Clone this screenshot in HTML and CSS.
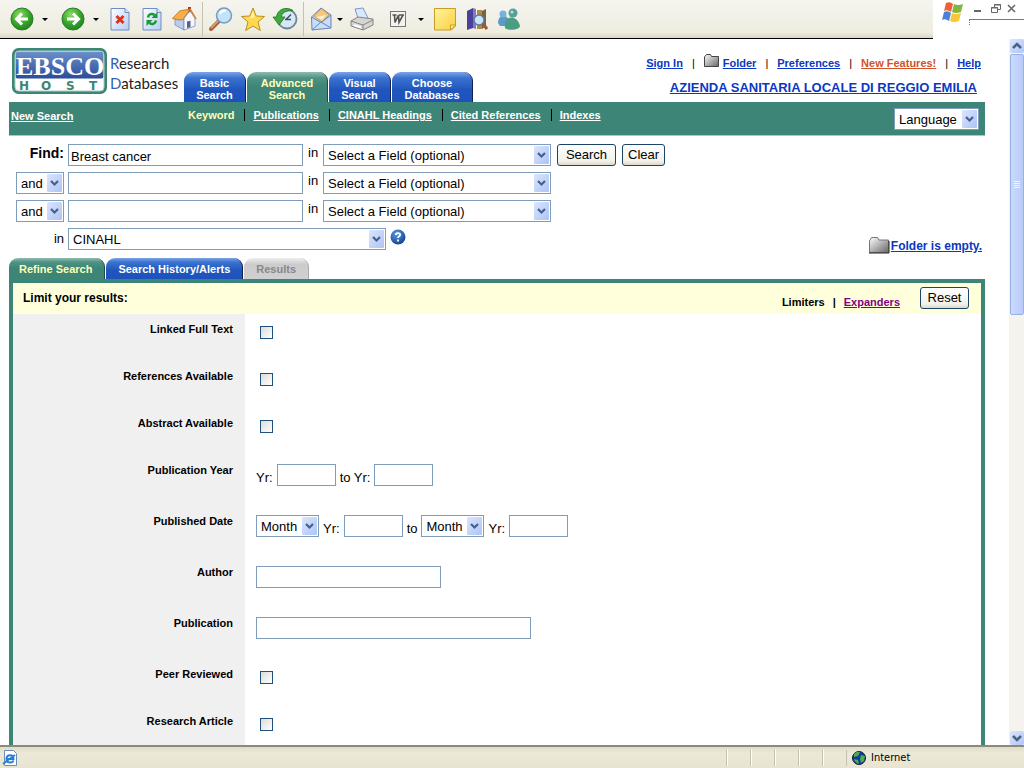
FILE: index.html
```html
<!DOCTYPE html>
<html lang="en">
<head>
<meta charset="utf-8">
<title>EBSCOhost Research Databases</title>
<link rel="stylesheet" href="styles.css">
</head>
<body>
<svg width="0" height="0" class="defs" aria-hidden="true">
  <defs>
    <radialGradient id="gGreen" cx=".4" cy=".3" r=".8"><stop offset="0" stop-color="#8fdc62"/><stop offset=".55" stop-color="#35a42b"/><stop offset="1" stop-color="#1c7a1c"/></radialGradient>
    <linearGradient id="gPage" x1="0" y1="0" x2="1" y2="1"><stop offset="0" stop-color="#fff"/><stop offset="1" stop-color="#b4ccf4"/></linearGradient>
    <linearGradient id="gNote" x1="0" y1="0" x2="1" y2="1"><stop offset="0" stop-color="#fff3a0"/><stop offset="1" stop-color="#fbd03c"/></linearGradient>
    <linearGradient id="gFolder" x1="0" y1="0" x2="1" y2="1"><stop offset="0" stop-color="#fff"/><stop offset="1" stop-color="#666"/></linearGradient>
    <linearGradient id="gLogo" x1="0" y1="0" x2="0" y2="1"><stop offset="0" stop-color="#6c90cc"/><stop offset="1" stop-color="#2b4c9a"/></linearGradient>
    <radialGradient id="gHelp" cx=".4" cy=".3" r=".8"><stop offset="0" stop-color="#5b9be0"/><stop offset="1" stop-color="#0b3a86"/></radialGradient>
  </defs>
</svg>

<header class="chrome">
  <div class="toolbar">
    <div class="tools nav-tools">
      <button class="tool" aria-label="Back"><svg viewBox="0 0 26 26"><circle cx="13" cy="13" r="11" fill="url(#gGreen)" stroke="#2b7d27"/><path d="M19 13H8M13 7.500 7.500 13l5.500 5.500" fill="none" stroke="#fff" stroke-width="3"/></svg></button>
      <span class="caret"></span>
    </div>
    <div class="tools nav-tools">
      <button class="tool" aria-label="Forward"><svg viewBox="0 0 26 26"><circle cx="13" cy="13" r="11" fill="url(#gGreen)" stroke="#2b7d27"/><path d="M7 13h11M13 7.500l5.500 5.500-5.500 5.500" fill="none" stroke="#fff" stroke-width="3"/></svg></button>
      <span class="caret"></span>
    </div>
    <div class="tools page-tools">
      <button class="tool" aria-label="Stop"><svg viewBox="0 0 26 26"><path d="M4 2.500h14l4 4v17.500H4z" fill="url(#gPage)" stroke="#6f8cc4"/><path d="M18 2.500v4h4" fill="#dce8fb" stroke="#6f8cc4"/><path d="m9.500 10 7 7m0-7-7 7" stroke="#e03318" stroke-width="3"/></svg></button>
      <button class="tool" aria-label="Refresh"><svg viewBox="0 0 26 26"><path d="M4 2.500h14l4 4v17.500H4z" fill="url(#gPage)" stroke="#6f8cc4"/><path d="M18 2.500v4h4" fill="#dce8fb" stroke="#6f8cc4"/><path d="M9 11.500c.5-3.500 4-4.500 6.500-2.500M17 14.500c-.5 3.500-4 4.500-6.500 2.500" fill="none" stroke="#179b2c" stroke-width="2.500"/><path d="M18.500 6v6h-6zM7.500 20v-6h6z" fill="#179b2c"/></svg></button>
      <button class="tool" aria-label="Home"><svg viewBox="0 0 26 26"><path d="M17 1h3v6h-3z" fill="#b23a22"/><path d="M4 12v7l9 5V11z" fill="#b9cdf0" stroke="#6a83b8" stroke-width=".7"/><path d="m13 12 6-7 5 7v8l-11 4z" fill="#f4f7fd" stroke="#6a83b8" stroke-width=".7"/><path d="M1.500 12.500 8.500 5 19 3l-7 10.500-4 .5z" fill="#f7ae4c" stroke="#b86d18" stroke-width=".8"/><path d="m19 3 6 10" stroke="#d98226" stroke-width="1.500"/><path d="M16 15.500l3.500-.8v6.300l-3.500 1.300z" fill="#52628a"/></svg></button>
    </div>
    <span class="divider"></span>
    <div class="tools page-tools">
      <button class="tool" aria-label="Search the web"><svg viewBox="0 0 26 26"><path d="m3 23 8-8" stroke="#a96438" stroke-width="4" stroke-linecap="round"/><path d="m3 22 7-7" stroke="#e0aa7c" stroke-width="1.500"/><circle cx="16" cy="9.500" r="7.500" fill="#c2e4f8" stroke="#7998c2" stroke-width="1.500"/><path d="M12 8c1-3 4-4 6-3" fill="none" stroke="#fff" stroke-width="2"/></svg></button>
      <button class="tool" aria-label="Favorites"><svg viewBox="0 0 26 26"><path d="m13 2 3.200 8 8.300.5-6.500 5.500 2.300 8.500L13 20l-7.300 4.500L8 16l-6.500-5.500L9.800 10z" fill="#ffd950" stroke="#bf8d1c" stroke-linejoin="round"/><path d="m13 5 1.500 6.500L10 12z" fill="#fff4b8"/></svg></button>
      <button class="tool" aria-label="History"><svg viewBox="0 0 26 26"><circle cx="15" cy="13" r="9.500" fill="#d8e7f5" stroke="#6d8499" stroke-width="1.800"/><path d="m14 13.500 5-5M13 13.500h6" stroke="#34506d" stroke-width="1.500"/><path d="M21 4.500C13-.5 5 4 4.500 11H1l6 8 6-8H9.500c0-4 4-6.500 11.500-6.500z" fill="#3eaa3b" stroke="#227324" stroke-width=".8"/></svg></button>
    </div>
    <span class="divider"></span>
    <div class="tools mail-tools">
      <button class="tool" aria-label="Mail"><svg viewBox="0 0 26 26"><path d="M2.500 11 12 2l10 7v13l-19 2z" fill="#c7ddf8" stroke="#6883b5"/><path d="m4.500 10 8-7.500 7.500 6.500-7 7z" fill="#f7c67c" stroke="#bd8b48" stroke-width=".7"/><path d="m7 11 10-2-4 5z" fill="#fdf1d4"/><path d="m2.500 11 9.500 5.500L22 9M3 24l9-8 10 6" fill="none" stroke="#6883b5"/></svg></button>
      <span class="caret"></span>
    </div>
    <div class="tools">
      <button class="tool" aria-label="Print"><svg viewBox="0 0 26 26"><path d="m6 3 8-1 5 10-9 3z" fill="#d9e9fd" stroke="#7a98cc"/><path d="m2 15 7-4 15 2v6l-10 5-12-4z" fill="#d5d5d2" stroke="#848484"/><path d="m2 15 12 4 10-5M14 19v5" fill="none" stroke="#848484"/><path d="m5 19 7 2.500" stroke="#fff" stroke-width="2"/></svg></button>
    </div>
    <div class="tools nav-tools word-tools">
      <button class="tool" aria-label="Edit with Word"><svg viewBox="0 0 26 26"><rect x="5.500" y="5.500" width="15" height="15" fill="#f3f3ef" stroke="#777"/><path d="M7.500 9h4M14 9h5M9.500 9l.5 7.500L13.500 9l.5 7.500L18 9" fill="none" stroke="#555" stroke-width="1.600"/></svg></button>
      <span class="caret"></span>
    </div>
    <div class="tools extra-tools">
      <button class="tool" aria-label="Notes"><svg viewBox="0 0 26 26"><path d="M2.500 2.500h21V20l-4 4h-17z" fill="url(#gNote)" stroke="#c79d28"/><path d="M23.500 19h-5v5z" fill="#fff0a0" stroke="#c79d28"/></svg></button>
      <button class="tool" aria-label="Research"><svg viewBox="0 0 26 26"><path d="m3 5 6-3v20l-6 2z" fill="#4c4098"/><path d="m9 2 3 1v20l-3-1z" fill="#8377c8"/><path d="M13 4h5v19h-5z" fill="#b2893e"/><path d="m18 5 4-2v17l-4 3z" fill="#74673e"/><circle cx="15" cy="14" r="5" fill="#c8e7fa" stroke="#607aa5" stroke-width="1.500"/><path d="m19 18 4 5" stroke="#9d582f" stroke-width="3"/></svg></button>
      <button class="tool" aria-label="Messenger"><svg viewBox="0 0 26 26"><path d="M2 17c0-9 10-10 11-1v4H4z" fill="#5a9bc9"/><circle cx="7" cy="8" r="3.500" fill="#77b3dc"/><path d="M9 22c-2-13 12-14 15-2 0 4-12 5-15 2z" fill="#4c9b83"/><circle cx="17" cy="7" r="4.500" fill="#5a9f97"/><circle cx="16" cy="6" r="1.500" fill="#b8ded4"/></svg></button>
    </div>
  </div>
  <div class="window-box">
    <svg class="flag" viewBox="0 0 24 24" aria-hidden="true"><path d="M5 3q4-2 7 1l-2 8q-4-3-7-1z" fill="#ee6035"/><path d="M13 4q4 2 9 0l-2 8q-5 2-9 0z" fill="#7fb83c"/><path d="M3 12q4-2 7 1l-2 8q-4-3-7-1z" fill="#4a82d4"/><path d="M11 13q4 2 9 0l-2 8q-5 2-9 0z" fill="#f8c636"/></svg>
    <div class="window-side">
      <svg viewBox="0 0 46 14" aria-hidden="true"><path d="M1 11h7" stroke="#666" stroke-width="2"/><path d="M18.500 7.500h6v5h-6zM21.500 7V4.500h6v5h-2.500M18 8h7M21 5h7" fill="none" stroke="#666"/><path d="m35 5 7 7m0-7-7 7" stroke="#666" stroke-width="1.500"/></svg>
      <span class="grip"></span>
    </div>
  </div>
</header>

<div class="viewport">
  <main class="page">
    <div class="masthead">
      <div class="brand">
        <svg class="logo" viewBox="0 0 96 46" role="img" aria-label="EBSCO Host"><rect x="1.500" y="1.500" width="92" height="43" rx="5" fill="#fff" stroke="#3d8576" stroke-width="3"/><rect x="3.500" y="3.500" width="88" height="27" rx="2" fill="url(#gLogo)"/><rect x="3" y="3" width="89" height="40" rx="4" fill="none" stroke="#a8cfc2"/><text x="4" y="27" class="logo-top">EBSCO</text><text x="7" y="42" class="logo-bottom">H</text><text x="29" y="42" class="logo-bottom">O</text><text x="54" y="42" class="logo-bottom">S</text><text x="77" y="42" class="logo-bottom">T</text></svg>
        <div class="tagline"><span><b>R</b>esearch</span><span><b>D</b>atabases</span></div>
      </div>
      <nav class="tabs top-tabs">
        <a class="tab" href="#">Basic<br>Search</a>
        <a class="tab active wide" href="#">Advanced<br>Search</a>
        <a class="tab" href="#">Visual<br>Search</a>
        <a class="tab wide" href="#">Choose<br>Databases</a>
      </nav>
      <div class="account">
        <div class="links">
          <a href="#">Sign In</a><span>|</span>
          <span class="folder-link"><svg viewBox="0 0 16 14"><path d="M.5 12.500V3l2-2.500h4l1 2h7v10z" fill="url(#gFolder)" stroke="#444"/></svg><a href="#">Folder</a></span><span>|</span>
          <a href="#">Preferences</a><span>|</span>
          <a class="hot" href="#">New Features!</a><span>|</span>
          <a href="#">Help</a>
        </div>
        <a class="institution" href="#">AZIENDA SANITARIA LOCALE DI REGGIO EMILIA</a>
      </div>
    </div>

    <nav class="subnav">
      <a class="new-search" href="#">New Search</a>
      <div class="sublinks">
        <span class="current">Keyword</span>
        <a href="#">Publications</a>
        <a href="#">CINAHL Headings</a>
        <a href="#">Cited References</a>
        <a href="#">Indexes</a>
      </div>
      <select class="language" aria-label="Language"><option>Language</option></select>
    </nav>

    <form class="search">
      <div class="line">
        <label class="lead find" for="q1">Find:</label>
        <input class="term" id="q1" type="text" value="Breast cancer">
        <label class="in" for="f1">in</label>
        <select class="field" id="f1"><option>Select a Field (optional)</option></select>
        <button class="btn search-btn" type="button">Search</button>
        <button class="btn" type="button">Clear</button>
      </div>
      <div class="line">
        <select class="lead" aria-label="Operator 2"><option>and</option></select>
        <input class="term" type="text" aria-label="Term 2">
        <label class="in" for="f2">in</label>
        <select class="field" id="f2"><option>Select a Field (optional)</option></select>
      </div>
      <div class="line">
        <select class="lead" aria-label="Operator 3"><option>and</option></select>
        <input class="term" type="text" aria-label="Term 3">
        <label class="in" for="f3">in</label>
        <select class="field" id="f3"><option>Select a Field (optional)</option></select>
      </div>
      <div class="line">
        <label class="lead" for="db">in</label>
        <select class="database" id="db"><option>CINAHL</option></select>
        <button class="help" type="button" aria-label="Help"><svg viewBox="0 0 16 16"><circle cx="8" cy="8" r="7.500" fill="url(#gHelp)"/><path d="M5.800 6c0-2.500 4.400-2.500 4.400-.3 0 1.600-2.200 1.500-2.200 3.300M8 10.500v2" fill="none" stroke="#fff" stroke-width="1.800"/></svg></button>
        <span class="folder-state"><svg viewBox="0 0 22 18"><path d="M1.500 16.500V5l2-3.500h6L11 4h9.500v12.500z" fill="url(#gFolder)" stroke="#777"/><path d="M1 17h20V5" fill="none" stroke="#222"/></svg><a href="#">Folder is empty.</a></span>
      </div>
    </form>

    <nav class="tabs panel-tabs">
      <a class="tab active" href="#">Refine Search</a>
      <a class="tab" href="#">Search History/Alerts</a>
      <span class="tab disabled">Results</span>
    </nav>
    <section class="panel">
      <div class="panel-head">
        <h2>Limit your results:</h2>
        <div class="modes"><span>Limiters</span><span>|</span><a href="#">Expanders</a></div>
        <button class="btn" type="button">Reset</button>
      </div>
      <div class="limit check"><label for="c1">Linked Full Text</label><div><input type="checkbox" id="c1"></div></div>
      <div class="limit check"><label for="c2">References Available</label><div><input type="checkbox" id="c2"></div></div>
      <div class="limit check"><label for="c3">Abstract Available</label><div><input type="checkbox" id="c3"></div></div>
      <div class="limit"><label for="y1">Publication Year</label><div><label for="y1">Yr:</label><input class="year" id="y1" type="text"><label for="y2">to Yr:</label><input class="year" id="y2" type="text"></div></div>
      <div class="limit"><label for="m1">Published Date</label><div><select class="month" id="m1"><option>Month</option></select><label for="y3">Yr:</label><input class="year" id="y3" type="text"><label for="m2">to</label><select class="month" id="m2"><option>Month</option></select><label for="y4">Yr:</label><input class="year" id="y4" type="text"></div></div>
      <div class="limit"><label for="au">Author</label><div><input class="author" id="au" type="text"></div></div>
      <div class="limit"><label for="pb">Publication</label><div><input class="publication" id="pb" type="text"></div></div>
      <div class="limit check"><label for="c4">Peer Reviewed</label><div><input type="checkbox" id="c4"></div></div>
      <div class="limit check"><label for="c5">Research Article</label><div><input type="checkbox" id="c5"></div></div>
    </section>
  </main>
  <div class="scrollbar" aria-hidden="true">
    <span class="arrow up"><svg viewBox="0 0 14 14"><path d="m3 9 4-4 4 4" fill="none" stroke="#4d6185" stroke-width="2.500"/></svg></span>
    <span class="thumb"><i></i><i></i><i></i><i></i></span>
    <span class="arrow down"><svg viewBox="0 0 14 14"><path d="m3 5 4 4 4-4" fill="none" stroke="#4d6185" stroke-width="2.500"/></svg></span>
  </div>
</div>

<footer class="status">
  <svg class="ie" viewBox="0 0 16 16" aria-hidden="true"><path d="M2.500.5h9l3 3v12h-12z" fill="#fff" stroke="#6c8bb8"/><path d="M4.500 9h7c0-5-7-5-7 0s6 4 7 1.500M2 13C0 15 7 9 13 5" fill="none" stroke="#2a7fd0" stroke-width="2"/></svg>
  <span class="cells"><i></i><i></i><i></i><i></i><i></i></span>
  <span class="zone"><svg viewBox="0 0 14 14" aria-hidden="true"><circle cx="7" cy="7" r="6.500" fill="#123c9c" stroke="#0a1c44"/><path d="M2 3q3-3 6-2l-2 4-4 1zM9 4l4 1-1 5-3 2-1-4zM2 8l4 1 1 4q-4-1-5-5z" fill="#4fae4a"/></svg>Internet</span>
</footer>
</body>
</html>
```
FILE: styles.css
```css
* { box-sizing: border-box; }
body {
  margin: 0;
  height: 100vh;
  display: flex;
  flex-direction: column;
  overflow: hidden;
  background: #fff;
  color: #000;
  font: 13px/16px "Liberation Sans", Arial, sans-serif;
}
.defs { position: absolute; }
svg { display: block; flex: none; }
a { color: #0a38c4; }
button, input, select { font: inherit; color: inherit; margin: 0; flex: none; }

/* Browser toolbar */
.chrome { display: flex; flex: none; height: 39px; }
.toolbar {
  flex: 1;
  display: flex;
  align-items: center;
  padding-left: 9px;
  background: linear-gradient(#f5f4ef, #eeede0 85%, #d9d6c2);
  border-bottom: 1px solid #000;
}
.tools { display: flex; align-items: center; gap: 6px; }
.nav-tools { gap: 5px; margin-right: 10px; }
.nav-tools + .page-tools { margin-left: -4px; }
.mail-tools { gap: 0; margin-right: 4px; }
.word-tools { margin: 0 6px 0 10px; }
.extra-tools { gap: 6px; }
.tool { width: 26px; height: 26px; padding: 0; border: 0; background: none; }
.tool svg { width: 26px; height: 26px; }
.caret { width: 10px; height: 3px; display: flex; justify-content: center; }
.caret::before { content: ""; border: 3px solid transparent; border-top-color: #000; border-bottom: 0; }
.divider { width: 1px; height: 34px; margin: 0 5px; background: #c5c2b0; }
.window-box { width: 91px; display: flex; align-items: flex-start; gap: 4px; padding-left: 8px; }
.flag { width: 24px; height: 24px; }
.window-side { flex: 1; }
.window-side svg { width: 46px; height: 14px; margin: 0 0 5px 4px; }
.grip { display: block; height: 6px; border: 0 dotted #777; border-width: 1px 0 0 1px; border-top-style: solid; }

/* Page area */
.viewport { flex: 1; min-height: 0; display: flex; }
.page { flex: 1; min-width: 0; overflow: hidden; padding: 9px 24px 0 9px; display: flex; flex-direction: column; }
.page > * { flex: none; }
.masthead { display: flex; min-height: 54px; }
.brand { display: flex; gap: 2px; width: 175px; padding-left: 3px; }
.logo { width: 96px; height: 46px; }
.logo-top { font: bold 26px "Liberation Serif", serif; fill: #fff; }
.logo-bottom { font: bold 12px "DejaVu Sans", sans-serif; fill: #3d8576; }
.tagline { display: flex; flex-direction: column; padding-top: 5px; font: 15px/20px Lato, sans-serif; color: #222; }
.tagline b { font-weight: 400; color: #3560b4; }

.tabs { display: flex; align-items: flex-end; gap: 1px; font-weight: bold; font-size: 11px; }
.tab {
  color: #fff;
  text-align: center;
  text-decoration: none;
  border-radius: 9px 9px 0 0;
  background: linear-gradient(#7ba5e4, #3a72d0 20%, #2056bc 60%, #1c52be);
  border-right: 1px solid #10224c;
}
.tab.active { color: #ffffb8; background: linear-gradient(#8fbcb0, #4f9284 20%, #3d8576 50%); border-right-color: #234a42; }
.tab.disabled { color: #888; background: linear-gradient(#eee, #ccc 30%, #d0d0d0); border-right-color: #aaa; }
.top-tabs .tab { width: 62px; padding: 5px 0 1px; line-height: 12px; }
.top-tabs .wide { width: 81px; }

.account { flex: 1; display: flex; flex-direction: column; align-items: flex-end; font-weight: bold; }
.links { display: flex; gap: 9px; padding: 7px 4px 0 0; font-size: 11px; }
.links > span:not(.folder-link) { font-weight: 400; }
.links .hot { color: #d2522a; }
.folder-link { display: flex; gap: 3px; }
.folder-link svg { width: 16px; height: 14px; margin-top: -1px; }
.institution { padding: 9px 8px 0 0; font-size: 13px; }

.subnav {
  display: flex;
  align-items: flex-start;
  height: 34px;
  padding: 5px 6px 0 2px;
  background: #3d8576;
  border-bottom: 1px solid #c9b8bc;
  font-weight: bold;
  font-size: 11px;
  color: #fff;
}
.subnav a { color: #fff; }
.new-search { width: 177px; padding-top: 1px; }
.sublinks { flex: 1; display: flex; }
.sublinks > * + * { margin-left: 10px; display: flex; }
.sublinks > * + *::before { content: ""; width: 1px; height: 12px; margin: 2px 8px 0 0; background: #000; }
.current { color: #ffffb8; }

/* Form controls */
input[type="text"], select {
  height: 22px;
  border: 1px solid #7f9db9;
  border-radius: 0;
  background-color: #fff;
  color: #000;
  font-weight: 400;
  font-size: 13px;
}
input[type="text"] { padding: 2px 2px 0; }
select {
  appearance: none;
  padding: 1px 18px 0 4px;
  background-repeat: no-repeat;
  background-position: right 1px center;
  background-image: url("data:image/svg+xml,%3Csvg xmlns='http://www.w3.org/2000/svg' width='15' height='18'%3E%3ClinearGradient id='g' x2='1' y2='1'%3E%3Cstop stop-color='%23dbe5fd'/%3E%3Cstop offset='1' stop-color='%23aec4f5'/%3E%3C/linearGradient%3E%3Crect width='15' height='18' rx='1' fill='url(%23g)'/%3E%3Cpath d='M4 7l3.500 3.500L11 7' fill='none' stroke='%23456090' stroke-width='2.200'/%3E%3C/svg%3E");
}
.language { width: 85px; margin-top: 1px; }
.btn {
  height: 22px;
  padding: 0 5px;
  border: 1px solid #1c4368;
  border-radius: 3px;
  background: linear-gradient(#fff, #f2f1ea 80%, #dcd8cc);
  font-size: 13px;
  font-weight: 400;
}

/* Search form */
.search { display: flex; flex-direction: column; gap: 6px; padding: 8px 3px 0 7px; }
.line { display: flex; height: 22px; }
.line .lead { width: 48px; margin-right: 4px; }
.line label.lead { text-align: right; line-height: 22px; }
.line label.find { font-weight: bold; font-size: 14px; line-height: 18px; }
.term { width: 235px; }
.in { width: 20px; padding-left: 5px; line-height: 18px; }
.field { width: 228px; margin-right: 6px; }
.search-btn { margin-right: 6px; width: 59px; }
.database { width: 318px; }
.help { width: 16px; height: 16px; margin: 1px 0 0 4px; padding: 0; border: 0; background: none; }
.help svg { width: 16px; height: 16px; }
.folder-state { margin-left: auto; display: flex; align-items: flex-end; gap: 1px; height: 26px; font-weight: bold; font-size: 12px; }
.folder-state svg { width: 22px; height: 18px; }

/* Limiter panel */
.panel-tabs { padding-top: 8px; }
.panel-tabs .tab { padding: 3px 12px 2px; }
.panel-tabs .tab:first-child { padding-left: 10px; }
.panel { border: 4px solid #3d8576; border-bottom: 0; }
.panel-head { display: flex; align-items: flex-start; height: 31px; padding: 4px 12px 0 10px; background: #ffffdc; font-weight: bold; }
.panel-head h2 { flex: 1; margin: 3px 0 0; font-size: 12px; line-height: 16px; }
.panel-head .btn { width: 49px; }
.modes { display: flex; gap: 8px; margin: 7px 20px 0 0; font-size: 11px; }
.modes a { color: #800080; }
.limit { display: grid; grid-template-columns: 232px 1fr; min-height: 51px; }
.limit.check { min-height: 47px; }
.limit > label { padding: 7px 12px 0 0; background: #f0f0f0; text-align: right; font-weight: bold; font-size: 11px; }
.limit > div { display: flex; gap: 4px; padding: 9px 0 0 11px; }
.limit > div > label { padding-top: 6px; }
input[type="checkbox"] {
  appearance: none;
  width: 13px;
  height: 13px;
  margin: 3px 4px;
  border: 1px solid #1c5180;
  background: linear-gradient(135deg, #dcdcd7, #fff);
}
.year { width: 59px; }
.month { width: 63px; }
.author { width: 185px; }
.publication { width: 275px; }

/* Scrollbar */
.scrollbar { width: 15px; display: flex; flex-direction: column; background: #f4f3ee; padding: 0 0 0 1px; }
.arrow { height: 14px; border-radius: 2px; background: linear-gradient(135deg, #dbe5fd, #b0c5f7); }
.arrow svg { width: 14px; height: 14px; }
.thumb {
  flex: 0 0 37%;
  margin-top: 1px;
  display: flex;
  flex-direction: column;
  align-items: center;
  justify-content: center;
  gap: 1px;
  border: 1px solid #98b0e8;
  border-radius: 2px;
  background: linear-gradient(90deg, #cbd9fd, #bacbf8);
}
.thumb i { width: 6px; height: 1px; background: #eef3ff; }
.down { margin-top: auto; }

/* Status bar */
.status {
  flex: none;
  display: flex;
  align-items: center;
  height: 23px;
  padding: 0 6px 0 2px;
  border-top: 2px solid #8c8a7c;
  background: linear-gradient(#dfdcc8, #ece9d8 30%, #e8e4d0);
  font: 11px/16px "DejaVu Sans Condensed", "DejaVu Sans", sans-serif;
}
.ie { width: 16px; height: 16px; }
.cells { flex: 1; display: flex; justify-content: flex-end; }
.cells i { width: 24px; height: 17px; border-left: 1px solid #c5c2ae; box-shadow: inset 1px 0 #fff; }
.zone { display: flex; align-items: center; gap: 5px; width: 172px; padding-left: 5px; border-left: 1px solid #c5c2ae; }
.zone svg { width: 14px; height: 14px; }
```
